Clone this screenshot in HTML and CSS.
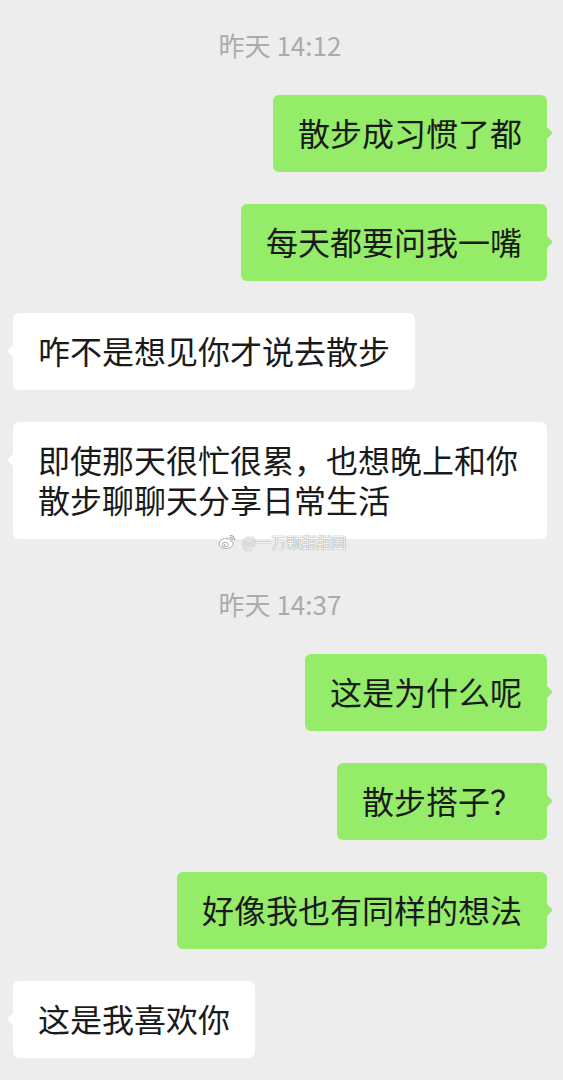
FILE: index.html
```html
<!DOCTYPE html>
<html lang="zh-CN">
<head>
  <meta charset="UTF-8">
  <title>聊天记录</title>
  <link rel="stylesheet" href="styles.css">
</head>
<body>
  <div class="chat">
    <div class="time">昨天 14:12</div>

    <div class="row me"><div class="bubble">散步成习惯了都</div></div>
    <div class="row me"><div class="bubble">每天都要问我一嘴</div></div>
    <div class="row other"><div class="bubble">咋不是想见你才说去散步</div></div>
    <div class="row other">
      <div class="bubble">即使那天很忙很累，也想晚上和你散步聊聊天分享日常生活</div>
      <!-- watermark sits over the bubble's bottom edge -->
      <div class="watermark">
        <svg class="weibo" viewBox="0 0 18 16" width="18" height="16">
          <path d="M7.5 4.2C4.3 4.6 1.2 7.3 1.2 10.1c0 2.6 3 4.4 6.6 4.4 4.2 0 7.3-2.3 7.3-4.6 0-1.6-1.5-2.3-2.4-2.5.4-.9.6-2.300-.6-2.6-1-.2-2.4.5-3.1.9.5-1.1.4-2-.4-1.9-.4 0-.7.2-1.1.4z" fill="#fff" stroke="#aaa" stroke-width="1"/>
          <ellipse cx="7.2" cy="10.6" rx="3.2" ry="2.3" fill="#fff" stroke="#aaa" stroke-width="1"/>
          <circle cx="6.6" cy="10.9" r="0.9" fill="#aaa"/>
          <path d="M12.3 1.4a4.2 4.2 0 0 1 4.2 4.6" fill="none" stroke="#aaa" stroke-width="1.2" stroke-linecap="round"/>
          <path d="M12.1 3.4a2.2 2.2 0 0 1 2.4 2.4" fill="none" stroke="#aaa" stroke-width="1.1" stroke-linecap="round"/>
        </svg>
        <span>@一万颗甜甜圈</span>
      </div>
    </div>

    <div class="time">昨天 14:37</div>

    <div class="row me"><div class="bubble">这是为什么呢</div></div>
    <div class="row me"><div class="bubble">散步搭子？</div></div>
    <div class="row me"><div class="bubble">好像我也有同样的想法</div></div>
    <div class="row other"><div class="bubble">这是我喜欢你</div></div>
  </div>
</body>
</html>
```

FILE: styles.css
```css
body {
  margin: 0;
  background: #ededed;
  font-family: "Noto Sans CJK SC", "Noto Sans", sans-serif;
  height: 1080px;
  overflow: hidden;
}

.chat {
  display: flex;
  flex-direction: column;
  padding: 12px 16px 0 13px;
}

.time {
  text-align: center;
  font-size: 26px;
  line-height: 30px;
  color: #ababab;
  margin: 18px 0 35px;
}

.row {
  display: flex;
  position: relative;
  margin-bottom: 32px;
}

.row.me {
  justify-content: flex-end;
}

.bubble {
  position: relative;
  max-width: 484px;
  padding: 17px 25px 20px;
  font-size: 32px;
  line-height: 40px;
  color: #1a1a1a;
  border-radius: 6px;
}

.me .bubble {
  background: #95ec69;
}

.other .bubble {
  background: #fff;
}

/* bubble tail */
.bubble::after {
  content: "";
  position: absolute;
  top: 31px;
  width: 14px;
  height: 14px;
  border-radius: 2px;
  background: inherit;
  transform: rotate(45deg);
}

.me .bubble::after {
  right: -3px;
}

.other .bubble::after {
  left: -3px;
}

.watermark {
  position: absolute;
  left: 205px;
  bottom: -13px;
  display: flex;
  align-items: center;
  gap: 6px;
  font-size: 15px;
  line-height: 20px;
  color: rgba(255, 255, 255, 0.92);
  text-shadow: 0 0 1px #999, 0 0 1px #999;
}

.weibo {
  display: block;
}
```
